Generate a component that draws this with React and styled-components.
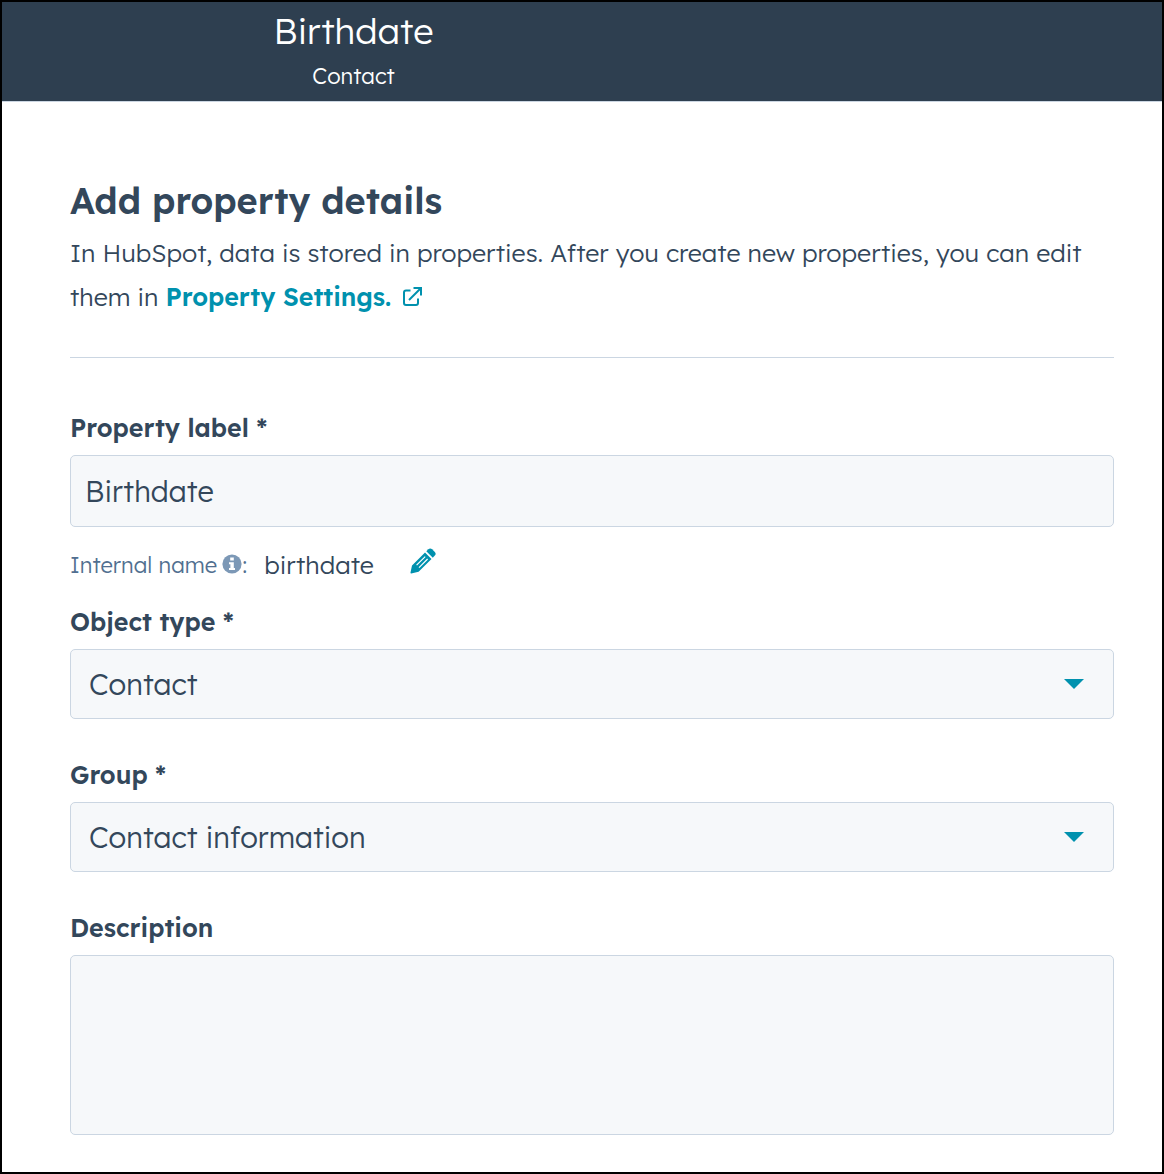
import React, { useState } from "react";
import styled, { createGlobalStyle } from "styled-components";

const GlobalStyle = createGlobalStyle`
  *, *::before, *::after { box-sizing: border-box; }
  body {
    margin: 0;
    background: #ffffff;
    color: #33475b;
    font-family: "Lexend Deca", Lexend, Inter, "Open Sans", sans-serif;
    font-size: 25px;
    font-weight: 300;
    line-height: 44px;
  }
  input, select, textarea, button { font: inherit; color: inherit; }
`;

const Page = styled.div`
  min-height: 100vh;
  border: 2px solid #000000;
  background: #ffffff;
`;

const Header = styled.header`
  padding: 4px 0;
  background: #2e3f50;
  border-bottom: 1px solid #cbd6e2;
  color: #ffffff;
`;

const HeaderText = styled.div`
  max-width: 703px;
  text-align: center;
`;

const HeaderTitle = styled.h1`
  margin: 0;
  font-size: 36px;
  font-weight: 300;
  line-height: 50px;
`;

const HeaderSubtitle = styled.p`
  margin: 0;
  font-size: 22px;
  line-height: 41px;
`;

const Main = styled.main`
  padding: 75px 48px 36px 68px;
`;

const SectionTitle = styled.h2`
  margin: 0 0 6px;
  font-size: 36px;
  font-weight: 600;
  line-height: 48px;
`;

const Intro = styled.p`
  margin: 0;
`;

const SettingsLink = styled.a`
  color: #0091ae;
  font-weight: 600;
  text-decoration: none;

  svg { margin-left: 12px; }
`;

const Divider = styled.hr`
  height: 1px;
  margin: 38px 0 52px;
  border: 0;
  background: #cbd6e2;
`;

const Field = styled.div`
  display: flex;
  flex-direction: column;
  gap: 9px;
  margin-bottom: ${({ $last, $tight }) => ($last || $tight ? "0" : "38px")};
`;

const Label = styled.label`
  font-weight: 600;
  line-height: 36px;
`;

const control = `
  display: block;
  width: 100%;
  margin: 0;
  border: 1px solid #cbd6e2;
  border-radius: 5px;
  background: #f6f8fa;
  color: #33475b;
  font-size: 29px;
  line-height: 40px;
  outline-color: #0091ae;
`;

const TextInput = styled.input`
  ${control}
  height: 72px;
  padding: 0 14px;
`;

const SelectBox = styled.div`
  display: grid;
  align-items: center;

  > * { grid-area: 1 / 1; }
  svg { justify-self: end; margin-right: 30px; pointer-events: none; }
`;

const Select = styled.select`
  ${control}
  appearance: none;
  height: 70px;
  padding: 0 60px 0 18px;
`;

const TextArea = styled.textarea`
  ${control}
  height: 180px;
  padding: 14px;
  resize: none;
`;

const InternalName = styled.div`
  display: flex;
  align-items: center;
  height: 77px;
  padding-bottom: 2px;
`;

const InternalLabel = styled.span`
  display: inline-flex;
  align-items: center;
  margin-right: 17px;
  color: #516f90;
  font-size: 22px;

  svg { margin: 0 0 2px 5px; }
`;

const EditButton = styled.button`
  display: flex;
  margin: 0 0 8px 36px;
  padding: 0;
  border: 0;
  background: none;
  cursor: pointer;
`;

const ExternalIcon = () => (
  <svg width="19" height="19" viewBox="0 0 19 19" fill="none" stroke="#0091ae" strokeWidth="2" aria-hidden="true">
    <path d="M7.5 3.6H3Q1 3.6 1 5.6V16Q1 18 3 18H13Q15 18 15 16V11.5" />
    <path d="M6 13L17 2" />
    <path d="M10.5 1H18V8.5" />
  </svg>
);

const InfoIcon = () => (
  <svg width="20" height="20" viewBox="0 0 20 20" aria-hidden="true">
    <circle cx="10" cy="10" r="9.6" fill="#7c98b6" />
    <path d="M8.2 3.4h3.6v3.2H8.2zM7 8.2h4.8v5.8H13v2H7v-2h1.4v-3.8H7z" fill="#ffffff" />
  </svg>
);

const PencilIcon = () => (
  <svg width="26" height="26" viewBox="0 0 26 26" aria-hidden="true">
    <path d="M15 4.5L21.5 11L8.6 23.8L1.2 25.4Q0.3 25.6 0.5 24.6L2 17.4Z" fill="#0091ae" />
    <path d="M16.3 3.2L18.3 1.3Q20.2 -0.4 22.1 1.2L24.8 3.9Q26.5 5.8 24.8 7.6L22.8 9.7Z" fill="#0091ae" />
    <path d="M6.6 17.2L15.2 8.6M9 19.6L17.6 11" stroke="#ffffff" strokeWidth="1.2" />
  </svg>
);

const Caret = () => (
  <svg width="20" height="10" viewBox="0 0 20 10" aria-hidden="true">
    <path d="M0 0H20L10 10Z" fill="#0091ae" />
  </svg>
);

function SelectField({ id, label, options }) {
  return (
    <Field>
      <Label htmlFor={id}>{label} *</Label>
      <SelectBox>
        <Select id={id} required>
          {options.map((option) => (
            <option key={option}>{option}</option>
          ))}
        </Select>
        <Caret />
      </SelectBox>
    </Field>
  );
}

export default function App() {
  const [name, setName] = useState("Birthdate");

  return (
    <>
      <GlobalStyle />
      <Page>
        <Header>
          <HeaderText>
            <HeaderTitle>Birthdate</HeaderTitle>
            <HeaderSubtitle>Contact</HeaderSubtitle>
          </HeaderText>
        </Header>
        <Main>
          <SectionTitle>Add property details</SectionTitle>
          <Intro>
            In HubSpot, data is stored in properties. After you create new properties, you can edit
            them in{" "}
            <SettingsLink href="#settings">
              Property Settings.
              <ExternalIcon />
            </SettingsLink>
          </Intro>
          <Divider />
          <Field $tight>
            <Label htmlFor="property-label">Property label *</Label>
            <TextInput
              id="property-label"
              required
              value={name}
              onChange={(event) => setName(event.target.value)}
            />
          </Field>
          <InternalName>
            <InternalLabel>
              Internal name
              <InfoIcon />:
            </InternalLabel>
            <span>birthdate</span>
            <EditButton type="button" aria-label="Edit internal name">
              <PencilIcon />
            </EditButton>
          </InternalName>
          <SelectField id="object-type" label="Object type" options={["Contact"]} />
          <SelectField id="group" label="Group" options={["Contact information"]} />
          <Field $last>
            <Label htmlFor="description">Description</Label>
            <TextArea id="description" />
          </Field>
        </Main>
      </Page>
    </>
  );
}
